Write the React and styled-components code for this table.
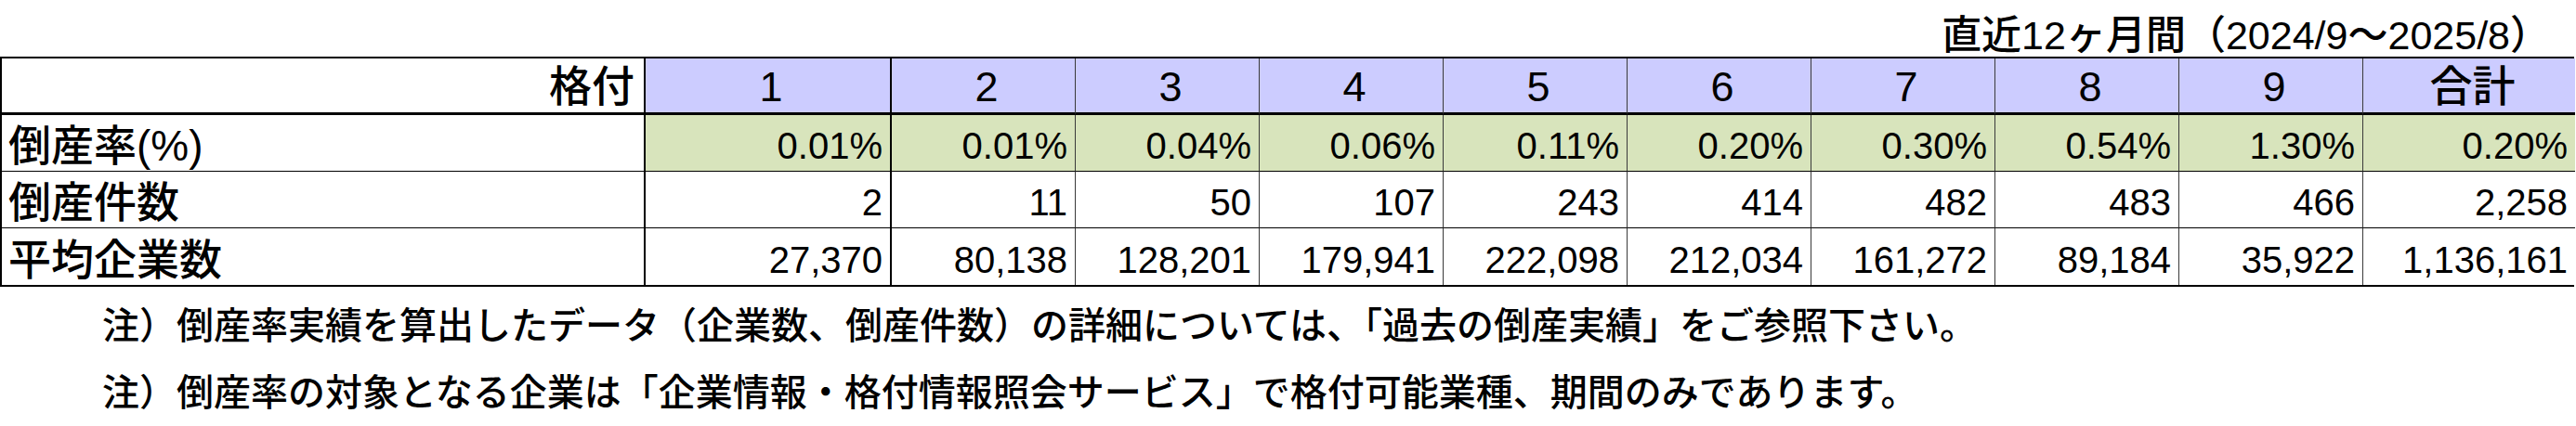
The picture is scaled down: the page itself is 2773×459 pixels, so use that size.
import styled, { createGlobalStyle } from "styled-components";

const GlobalStyle = createGlobalStyle`
  html, body {
    margin: 0;
    padding: 0;
    background: #ffffff;
  }
  body {
    font-family: "Liberation Sans", "Noto Sans CJK JP", sans-serif;
    color: #000;
  }
  * {
    box-sizing: border-box;
  }
`;

const Page = styled.div`
  width: 2773px;
  height: 459px;
  overflow: hidden;
`;

const TitleBar = styled.div`
  height: 61px;
  display: flex;
  align-items: center;
  justify-content: flex-end;
  padding-right: 28px;
  padding-top: 6px;
  font-size: 43px;
  font-weight: 500;
`;

const Table = styled.div`
  display: grid;
  grid-template-columns: 693px 265px repeat(8, 198px) 228px;
  grid-auto-rows: 61px;
  width: 2771px;
  border: 2px solid #000;
`;

const Cell = styled.div`
  display: flex;
  align-items: center;
  padding-top: ${p => (p.$head ? "2px" : "6px")};
  justify-content: ${p => (p.$align === "left" ? "flex-start" : p.$align === "center" ? "center" : "flex-end")};
  padding-left: 7px;
  padding-right: ${p => (p.$align === "center" ? "0" : p.$head ? "10px" : "8px")};
  background: ${p => p.$bg || "#ffffff"};
  border-right: ${p => (p.$last ? "none" : p.$strong ? "2px solid #000" : "1px solid #3a3a3a")};
  border-bottom: ${p => (p.$head ? "3px solid #000" : p.$bottom ? "none" : "1px solid #000")};
  font-size: ${p => (p.$label ? "46px" : p.$head ? "45px" : "40px")};
  font-weight: ${p => (p.$label ? 500 : 400)};
  font-feature-settings: "palt";
  white-space: nowrap;
  line-height: 1;
`;

const Notes = styled.div`
  margin-top: 6px;
  padding-left: 110px;
  font-size: 40px;
  font-weight: 500;
  line-height: 72px;
  white-space: nowrap;
`;

const HEAD_BG = "#ccccff";
const RATE_BG = "#d8e4bc";

const grades = ["1", "2", "3", "4", "5", "6", "7", "8", "9", "合計"];

const rows = [
  {
    label: "倒産率(%)",
    bg: RATE_BG,
    values: ["0.01%", "0.01%", "0.04%", "0.06%", "0.11%", "0.20%", "0.30%", "0.54%", "1.30%", "0.20%"],
  },
  {
    label: "倒産件数",
    values: ["2", "11", "50", "107", "243", "414", "482", "483", "466", "2,258"],
  },
  {
    label: "平均企業数",
    values: ["27,370", "80,138", "128,201", "179,941", "222,098", "212,034", "161,272", "89,184", "35,922", "1,136,161"],
  },
];

export default function App() {
  return (
    <Page>
      <GlobalStyle />
      <TitleBar>直近12ヶ月間（2024/9～2025/8）</TitleBar>
      <Table>
        <Cell $head $label $strong>格付</Cell>
        {grades.map((g, i) => (
          <Cell
            key={g}
            $head
            $label={g === "合計"}
            $align="center"
            $bg={HEAD_BG}
            $strong={i === 0}
            $last={i === grades.length - 1}
          >
            {g}
          </Cell>
        ))}
        {rows.map((row, r) => (
          <Row key={row.label} row={row} bottom={r === rows.length - 1} />
        ))}
      </Table>
      <Notes>
        <div>注）倒産率実績を算出したデータ（企業数、倒産件数）の詳細については、「過去の倒産実績」をご参照下さい。</div>
        <div>注）倒産率の対象となる企業は「企業情報・格付情報照会サービス」で格付可能業種、期間のみであります。</div>
      </Notes>
    </Page>
  );
}

function Row({ row, bottom }) {
  return (
    <>
      <Cell $label $align="left" $strong $bottom={bottom}>
        {row.label}
      </Cell>
      {row.values.map((v, i) => (
        <Cell
          key={i}
          $bg={row.bg}
          $strong={i === 0}
          $last={i === row.values.length - 1}
          $bottom={bottom}
        >
          {v}
        </Cell>
      ))}
    </>
  );
}
